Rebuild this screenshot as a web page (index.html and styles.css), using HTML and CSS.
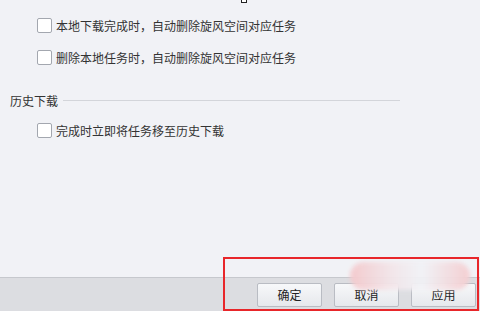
FILE: index.html
```html
<!DOCTYPE html>
<html lang="zh-CN">
<head>
<meta charset="UTF-8">
<meta name="viewport" content="width=device-width, initial-scale=1.0">
<title>下载设置</title>
<link rel="stylesheet" href="styles.css">
</head>
<body>

<div class="page">
  <div class="options">
    <span class="tiny-mark"></span>

    <label class="row">
      <span class="check"></span>
      <span>本地下载完成时，自动删除旋风空间对应任务</span>
    </label>
    <label class="row">
      <span class="check"></span>
      <span>删除本地任务时，自动删除旋风空间对应任务</span>
    </label>

    <div class="section">
      <span class="section-title">历史下载</span>
      <span class="section-line"></span>
    </div>

    <label class="row row-history">
      <span class="check"></span>
      <span>完成时立即将任务移至历史下载</span>
    </label>
  </div>

  <div class="footer">
    <button class="btn">确定</button>
    <button class="btn">取消</button>
    <button class="btn">应用</button>
  </div>

  <div class="blur-spot"></div>
  <div class="highlight"></div>
</div>

</body>
</html>
```

FILE: styles.css
```css
body {
  margin: 0;
  background-color: #f1f2f6;
  color: #333;
  font-family: "Noto Sans CJK SC", "Liberation Sans", sans-serif;
  font-size: 12px;
}
.page {
  position: relative;
  height: 311px;
  display: flex;
  flex-direction: column;
  overflow: hidden;
}
.options {
  flex: 1;
  padding-top: 9px;
}
.tiny-mark {
  position: absolute;
  left: 241px;
  top: -2px;
  width: 4px;
  height: 3px;
  border: 1px solid #222;
  background-color: #fff;
}
.row {
  display: flex;
  align-items: center;
  height: 32px;
  padding-left: 37px;
}
.row-history {
  margin-top: 5px;
}
.check {
  width: 13px;
  height: 13px;
  border: 1px solid #a3a7af;
  border-radius: 2px;
  background-color: #fff;
  margin-right: 4px;
}
.section {
  display: flex;
  align-items: center;
  height: 18px;
  margin-top: 18px;
  padding-left: 10px;
}
.section-title {
  margin-right: 5px;
}
.section-line {
  width: 337px;
  height: 1px;
  background-color: #d3d5da;
}
.footer {
  height: 34px;
  box-sizing: border-box;
  border-top: 1px solid #c6c8cd;
  background-color: #dcdde1;
  display: flex;
  justify-content: flex-end;
  align-items: flex-start;
  gap: 12px;
  padding: 5px 4px 0 0;
}
.btn {
  width: 65px;
  height: 24px;
  border: 1px solid #b9bcc3;
  border-radius: 2px;
  background: linear-gradient(#f7f8fa, #e6e8ec);
  color: #222;
  font-family: inherit;
  font-size: 12px;
  padding: 0 0 2px;
}
.blur-spot {
  position: absolute;
  left: 350px;
  top: 262px;
  width: 120px;
  height: 28px;
  border-radius: 14px;
  background: linear-gradient(90deg, #f4c9cc, #f3e6ea 35%, #f1f2f6 60%, #f5cdd0);
  filter: blur(2px);
  opacity: 0.95;
}
.highlight {
  position: absolute;
  left: 223px;
  top: 257px;
  width: 252px;
  height: 50px;
  border: 2px solid #e8262a;
}
```
